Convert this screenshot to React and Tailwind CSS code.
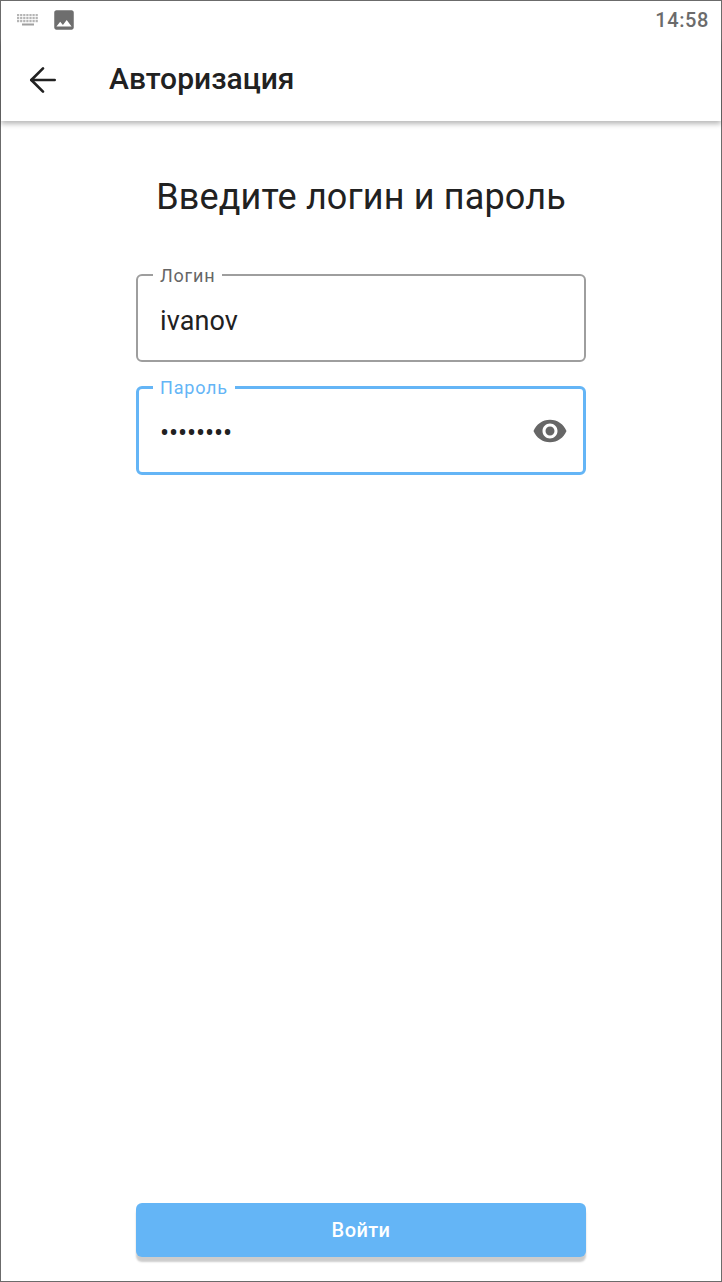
import React from 'react';
import { ArrowLeft } from 'lucide-react';
import { MdImage, MdVisibility } from 'react-icons/md';

function KeyboardGlyph() {
  // tiny blurred keyboard from the status bar
  const keys = [];
  for (let row = 0; row < 3; row++) {
    for (let col = 0; col < 7; col++) {
      keys.push(<rect key={`${row}-${col}`} x={col * 3.1} y={row * 3} width="2.2" height="2.2" />);
    }
  }
  return (
    <svg width="22" height="12" viewBox="0 0 22 12" fill="#b5b5b5">
      {keys}
      <rect x="5" y="9.5" width="12" height="2" fill="#a0a0a0" />
    </svg>
  );
}

function OutlinedField({ label, focused, children }) {
  return (
    <div className={focused
      ? 'relative flex h-[89px] items-center justify-between rounded-[6px] border-[3px] border-[#64b5f6] pl-[21px] pr-[15px]'
      : 'relative flex h-[88px] items-center justify-between rounded-[6px] border-2 border-[#9e9e9e] pl-[22px] pr-4'}>
      <span className={focused
        ? 'absolute left-[14px] top-[-11px] h-[16px] bg-white px-[7px] text-[18px] leading-[20px] tracking-[0.8px] text-[#64b5f6]'
        : 'absolute left-[15px] top-[-10px] h-[16px] bg-white px-[7px] text-[18px] leading-[20px] tracking-[0.8px] text-[#666666]'}>
        {label}
      </span>
      {children}
    </div>
  );
}

export default function App() {
  return (
    <div className="flex h-[1282px] w-[722px] flex-col border border-[#6b6b6b] bg-white font-['Roboto',sans-serif] text-[#212121]">
      {/* Status bar */}
      <div className="relative z-10 flex h-[38px] items-start justify-between bg-white pl-4 pr-3 pt-[6px]">
        <div className="flex items-center gap-[14px]">
          <KeyboardGlyph />
          <MdImage size={26} color="#6e6e6e" className="mx-[-2px]" />
        </div>
        <span className="mt-px text-[20px] font-medium leading-[24px] tracking-[0.6px] text-[#6b6b6b]">14:58</span>
      </div>

      {/* Toolbar */}
      <div className="flex h-[82px] items-center bg-white pl-[22px] shadow-[0_3px_5px_rgba(0,0,0,0.28)]">
        <ArrowLeft size={40} strokeWidth={1.6} color="#212121" />
        <h1 className="mb-[2px] ml-[46px] text-[30px] font-medium leading-[32px]">Авторизация</h1>
      </div>

      {/* Form */}
      <div className="flex flex-1 flex-col px-[135px] pb-6">
        <h2 className="mt-[54px] text-center text-[36px] font-normal leading-[44px] tracking-[0.15px]">Введите логин и пароль</h2>
        <div className="mt-[55px] flex flex-col gap-6">
          <OutlinedField label="Логин">
            <span className="pt-[6px] text-[27px] leading-[36px] tracking-[0.1px]">ivanov</span>
          </OutlinedField>
          <OutlinedField label="Пароль" focused>
            <span className="pt-[4px] text-[27px] leading-[36px] tracking-[-0.1px]">••••••••</span>
            <MdVisibility size={36} color="#666666" />
          </OutlinedField>
        </div>
        <button className="mt-auto h-[54px] w-full rounded-[6px] bg-[#64b5f6] text-[20px] font-medium tracking-[0.4px] text-white shadow-[0_5px_2px_rgba(0,0,0,0.2)]">
          Войти
        </button>
      </div>
    </div>
  );
}
